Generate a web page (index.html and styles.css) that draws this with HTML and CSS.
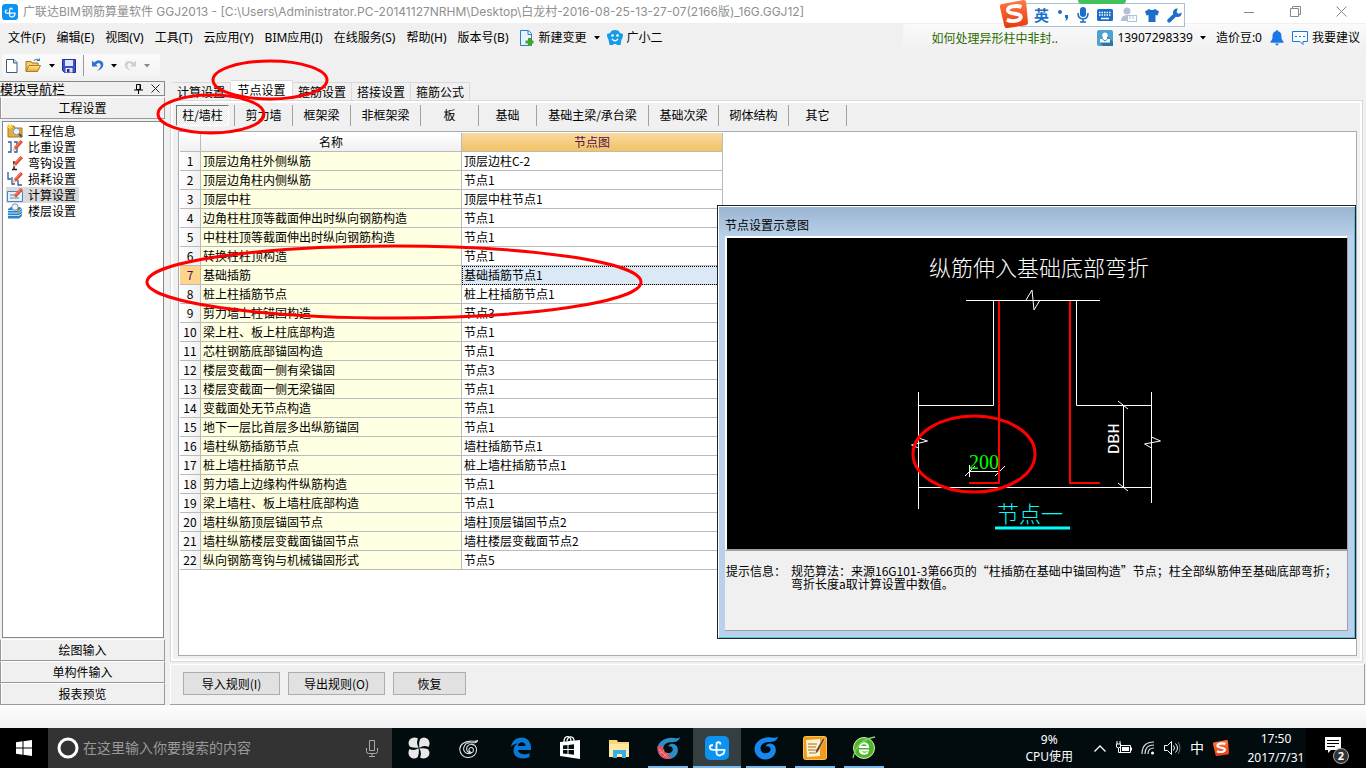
FILE: index.html
```html
<!DOCTYPE html>
<html lang="zh-CN">
<head>
<meta charset="utf-8">
<title>广联达BIM钢筋算量软件 GGJ2013</title>
<link rel="stylesheet" href="styles.css">
</head>
<body>
<svg class="defs" aria-hidden="true">
  <defs>
    <linearGradient id="gFolder" x2="0" y2="1"><stop stop-color="#ffe9a0"/><stop offset="1" stop-color="#e5a52c"/></linearGradient>
    <linearGradient id="gRed" x2="0" y2="1"><stop stop-color="#ff7a45"/><stop offset="1" stop-color="#e8380d"/></linearGradient>
    <symbol id="app" viewBox="0 0 24 24"><rect width="24" height="24" rx="5" fill="#0c93f2"/><g fill="none" stroke="#fff" stroke-width="1.800"><path d="M15.500 8.500c0-3-4-3-4 0v8c0 3 3 3.500 4.500 2.500"/><path d="M8 9c-4 0-4.500 4.800 0 4.800h11.500c0 3-1.500 5-4 5"/></g></symbol>
    <symbol id="pencil" viewBox="0 0 16 16"><path d="M7 9l6-7 2 1.500-6 7-2.500 1z" fill="#e2472f"/><path d="M7 8L13.500 1 16 3 9 10.500z" fill="#e2472f"/><path d="M7 8l2 2.500-3.500 1.500z" fill="#edc293"/><path d="M8.500 8L14 2.200" stroke="#ff9c85"/></symbol>
    <symbol id="caret" viewBox="0 0 6 4"><path d="M0 0h6L3 3.500z" fill="currentColor"/></symbol>
    <symbol id="swirl" viewBox="0 0 24 24"><path d="M23 2c-3 2-6 .5-9 .8C7 3 1 7 1.200 13 1.300 18 5.500 22.500 11 22.500c6 0 10.500-4 10.300-9.500-.2-3.500-2.500-6-5.500-6.300-4-.4-7 2.800-6.300 6.300.4 2.500 3 4 5 3.300-1.500-.7-2.600-2-2.200-3.800.5-2.200 3.600-2.800 4.800-.7 1.500 3-.8 6-4.600 6C8 18 5 14.500 6 10.500 7 6.500 11 4.500 15 4.800c4 .2 7 0 8-2.800z"/></symbol>
    <symbol id="gmark" viewBox="0 0 24 24"><path d="M24 .5c-3 2.500-6 .5-10 .8C6 1.800.5 7 .5 13c0 6 5 10.500 11 10.500S22 19 21.800 14c0-3.500-2-6-5-6.500-2.500-.3-4.500.8-5.300 2.800 3-.6 5.500 1 5 3.700-.4 2-2.500 3.300-5 3.300-3 0-5-2-5-4.800C6.500 8.500 10 6 14.500 6c5 0 8.500-1 9.500-5.500z"/></symbol>
    <symbol id="sogou" viewBox="0 0 26 26"><path d="M1 4L22 0q2 0 2.300 2L26 21q0 2-2 2.500L7 26q-2.500.5-3-2L0 7Q-.3 4.500 1 4z" fill="url(#gRed)"/><path d="M20 6.500C15 4.500 7 6 7.300 9.700c.5 4 12.700 2 12 6.300-.7 4-8.800 4.300-13 2.300" fill="none" stroke="#fff" stroke-width="3.500"/></symbol>
  </defs>
</svg>

<header class="titlebar">
  <svg class="i16"><use href="#app"/></svg>
  <h1>广联达BIM钢筋算量软件 GGJ2013 - [C:\Users\Administrator.PC-20141127NRHM\Desktop\白龙村-2016-08-25-13-27-07(2166版)_16G.GGJ12]</h1>
  <div class="winbtns">
    <button aria-label="最小化"><svg width="10" height="10"><path d="M0 5.500h10" stroke="#888"/></svg></button>
    <button aria-label="还原"><svg width="11" height="11"><path d="M.5 2.500h8v8h-8zM2.500 2.500v-2h8v8h-2" fill="none" stroke="#888"/></svg></button>
    <button aria-label="关闭"><svg width="11" height="11"><path d="M.5.5l10 10M10.500.5l-10 10" stroke="#888"/></svg></button>
  </div>
</header>

<div class="menubar">
  <nav class="menus">
    <button>文件(F)</button><button>编辑(E)</button><button>视图(V)</button><button>工具(T)</button><button>云应用(Y)</button><button>BIM应用(I)</button><button>在线服务(S)</button><button>帮助(H)</button><button>版本号(B)</button>
  </nav>
  <button class="tool"><svg class="i16" viewBox="0 0 16 16"><path d="M1.500.5h8l3 3v12h-11z" fill="#e8f4fd" stroke="#2a7fc4"/><path d="M9 .5v4h4" fill="none" stroke="#2a7fc4"/><path d="M9 8h3v2.500h2.500v3H12V16H9v-2.500H6.500v-3H9z" fill="#45a51c"/></svg>新建变更<svg class="caret wide"><use href="#caret"/></svg></button>
  <button class="tool"><svg class="i16" viewBox="0 0 16 16"><path d="M8 0c3 0 4 1 5 3l3 1c0 3-.5 4-1.500 5.500L13.500 15H10l-1-1H7l-1 1H2.500l-1-5.500C.5 8 0 7 0 4l3-1C4 1 5 0 8 0z" fill="#159be8"/><path d="M5 9q3 3.500 6 0" fill="none" stroke="#fff" stroke-width="1.300"/><circle cx="5.500" cy="5.500" r="1.300" fill="#fff"/><circle cx="10.500" cy="5.500" r="1.300" fill="#fff"/></svg>广小二</button>
  <div class="promo"><a href="#">如何处理异形柱中非封..</a></div>
  <div class="account">
    <button class="tool phone"><svg class="i16" viewBox="0 0 16 16"><rect width="16" height="16" rx="2" fill="#4aa3d4"/><path d="M9 5l7 7v4H6l-3-4z" fill="#2d769f"/><path d="M8 2.500a2.800 2.800 0 0 1 2 4.800L10.500 9H13v3.500H3V9h2.500L6 7.300a2.800 2.800 0 0 1 2-4.800z" fill="#fff"/><path d="M5.500 9l2.500 2 2.500-2" fill="none" stroke="#3a8ab8"/></svg>13907298339<svg class="caret wide"><use href="#caret"/></svg></button>
    <button>造价豆:0</button>
    <button aria-label="通知"><svg width="14" height="16" viewBox="0 0 14 16"><path d="M7 0c1 0 1 1 1 1.300 3 .7 3.500 3 3.500 5.700 0 2 .5 3 2 4.500v1.200H.5v-1.200C2 10 2.500 9 2.500 7c0-2.700.5-5 3.500-5.700C6 1 6 0 7 0zM5 13.500h4L7.500 15.500h-1z" fill="#1878e8"/></svg></button>
    <button class="tool"><svg class="i16" viewBox="0 0 16 16"><path d="M.5 1.500h15v10H11v3l-3-3H.5z" fill="#f7fbff" stroke="#1f74d8"/><path d="M3 6.500h10" stroke="#1f74d8" stroke-dasharray="2 2"/></svg>我要建议</button>
  </div>
</div>

<div class="toolrow"><div class="toolbar">
  <button aria-label="新建"><svg width="12" height="14" viewBox="0 0 12 14"><path d="M.5.500h7.500l3 3v10H.5z" fill="#fff" stroke="#3b5a80"/><path d="M7.500.5v3.500H11" fill="#cfe0f2" stroke="#3b5a80"/></svg></button>
  <button aria-label="打开"><svg width="17" height="15" viewBox="0 0 17 15"><path d="M1 13.500V3.500h5l1 1.500h6v3" fill="#f5cf68" stroke="#a87316"/><path d="M1 13.500L4 7.500h11.500l-3 6z" fill="url(#gFolder)" stroke="#b47b18"/><path d="M9 2.500q3-3 5.500 0v-2m0 2h-2.500" fill="none" stroke="#3b6ea8"/></svg></button>
  <button aria-label="打开列表"><svg class="caret"><use href="#caret"/></svg></button>
  <button class="save" aria-label="保存"><svg width="14" height="14"><path d="M.5.500h13v13h-11l-2-2z" fill="#3c4fd0" stroke="#26318f"/><path d="M3 1h8v6H3z" fill="#dfe8fb"/><path d="M3.500 9h7v4.500h-7z" fill="#e4e4ea"/><path d="M5 10h2.500v3.500H5z" fill="#26318f"/></svg></button>
  <span class="vsep"></span>
  <button aria-label="撤销"><svg width="13" height="13"><path d="M1 1.500v6h6L5 5.500q3-3 4.500 0Q10.500 8.500 6 12c6-2 7.500-6 5.500-9Q8-.5 3 3.500z" fill="#2f74d2"/></svg></button>
  <button aria-label="撤销列表"><svg class="caret"><use href="#caret"/></svg></button>
  <button aria-label="重做"><svg width="13" height="13"><path d="M12 1.500v6H6l2-2q-3-3-4.500 0Q2.500 8.500 7 12 1 10 .7 5.500 2-.5 10 3.500z" fill="#cfcfcf"/></svg></button>
  <button aria-label="重做列表" class="dim"><svg class="caret"><use href="#caret"/></svg></button>
</div></div>

<main class="work">
  <aside class="side">
    <div class="side-head"><span>模块导航栏</span>
      <button aria-label="固定"><svg width="9" height="10"><path d="M2.500.500h4v5h-4zM0 6h9M4.500 6v4M6 1v5" fill="none" stroke="#000"/></svg></button>
      <button aria-label="关闭导航栏"><svg width="9" height="9"><path d="M.5.5l8 8M8.500.5l-8 8" stroke="#222"/></svg></button></div>
    <button class="group">工程设置</button>
    <ul class="list">
      <li><button><svg class="i16" viewBox="0 0 16 16"><path d="M1 3h6l1 2h7v9H1z" fill="#e5ae3c" stroke="#ad791c"/><path d="M0 3h6M3 0v6M1 1l4 4M5 1L1 5" stroke="#ffe45b"/><circle cx="9.500" cy="8.500" r="3.300" fill="#e7f3fc" stroke="#7f93a6"/><path d="M12 11l3 3" stroke="#555" stroke-width="2"/></svg>工程信息</button></li>
      <li><button><svg class="i16" viewBox="0 0 16 16"><path d="M1 3h3v10H1M7 3h3v10H7" fill="none" stroke="#2e5c9c" stroke-width="1.300"/><use href="#pencil"/></svg>比重设置</button></li>
      <li><button><svg class="i16" viewBox="0 0 16 16"><path d="M7 6v9M5 14.500h5M6 8.500h4" stroke="#222" stroke-width="1.500"/><use href="#pencil"/></svg>弯钩设置</button></li>
      <li><button><svg class="i16" viewBox="0 0 16 16"><path d="M1 1v7h3M5 6v7h3M11 9v5h4" fill="none" stroke="#2e5c9c" stroke-width="1.300"/><use href="#pencil"/></svg>损耗设置</button></li>
      <li><button class="on"><svg class="i16" viewBox="0 0 16 16"><path d="M.5 4.500h15v10H.5z" fill="#e5f0fb" stroke="#4b86c3"/><path d="M3 8h5M3 11h9" stroke="#4b86c3"/><use href="#pencil"/></svg>计算设置</button></li>
      <li><button><svg class="i16" viewBox="0 0 16 16"><path d="M1 6l3-2h9l2 2v7l-3 2.500H1z" fill="#2c82c9"/><path d="M1 7.500h11l3-2M1 10h11l3-2M1 12.500h11l3-2" fill="none" stroke="#bfe1f8"/><circle cx="8" cy="4" r="3.200" fill="#eaf4fc" stroke="#8396a8"/><path d="M10 6.500l3 3" stroke="#c98a2b" stroke-width="1.500"/></svg>楼层设置</button></li>
    </ul>
    <button class="group">绘图输入</button>
    <button class="group">单构件输入</button>
    <button class="group">报表预览</button>
  </aside>

  <section class="content">
    <div class="tabs" role="tablist">
      <button role="tab">计算设置</button><button role="tab" aria-selected="true" class="on">节点设置</button><button role="tab">箍筋设置</button><button role="tab">搭接设置</button><button role="tab">箍筋公式</button>
    </div>
    <div class="pane">
      <div class="kinds">
        <button class="on">柱/墙柱</button><button>剪力墙</button><button>框架梁</button><button class="w70">非框架梁</button><button>板</button><button>基础</button><button class="w112">基础主梁/承台梁</button><button class="w70">基础次梁</button><button class="w70">砌体结构</button><button>其它</button>
      </div>
      <div class="sheet">
        <table>
          <colgroup><col class="c-no"><col class="c-name"><col class="c-node"></colgroup>
          <thead><tr><th></th><th>名称</th><th class="hot">节点图</th></tr></thead>
          <tbody>
            <tr><th>1</th><td>顶层边角柱外侧纵筋</td><td>顶层边柱C-2</td></tr>
            <tr><th>2</th><td>顶层边角柱内侧纵筋</td><td>节点1</td></tr>
            <tr><th>3</th><td>顶层中柱</td><td>顶层中柱节点1</td></tr>
            <tr><th>4</th><td>边角柱柱顶等截面伸出时纵向钢筋构造</td><td>节点1</td></tr>
            <tr><th>5</th><td>中柱柱顶等截面伸出时纵向钢筋构造</td><td>节点1</td></tr>
            <tr><th>6</th><td>转换柱柱顶构造</td><td>节点1</td></tr>
            <tr class="current"><th>7</th><td>基础插筋</td><td>基础插筋节点1</td></tr>
            <tr><th>8</th><td>桩上柱插筋节点</td><td>桩上柱插筋节点1</td></tr>
            <tr><th>9</th><td>剪力墙上柱锚固构造</td><td>节点3</td></tr>
            <tr><th>10</th><td>梁上柱、板上柱底部构造</td><td>节点1</td></tr>
            <tr><th>11</th><td>芯柱钢筋底部锚固构造</td><td>节点1</td></tr>
            <tr><th>12</th><td>楼层变截面一侧有梁锚固</td><td>节点3</td></tr>
            <tr><th>13</th><td>楼层变截面一侧无梁锚固</td><td>节点1</td></tr>
            <tr><th>14</th><td>变截面处无节点构造</td><td>节点1</td></tr>
            <tr><th>15</th><td>地下一层比首层多出纵筋锚固</td><td>节点1</td></tr>
            <tr><th>16</th><td>墙柱纵筋插筋节点</td><td>墙柱插筋节点1</td></tr>
            <tr><th>17</th><td>桩上墙柱插筋节点</td><td>桩上墙柱插筋节点1</td></tr>
            <tr><th>18</th><td>剪力墙上边缘构件纵筋构造</td><td>节点1</td></tr>
            <tr><th>19</th><td>梁上墙柱、板上墙柱底部构造</td><td>节点1</td></tr>
            <tr><th>20</th><td>墙柱纵筋顶层锚固节点</td><td>墙柱顶层锚固节点2</td></tr>
            <tr><th>21</th><td>墙柱纵筋楼层变截面锚固节点</td><td>墙柱楼层变截面节点2</td></tr>
            <tr><th>22</th><td>纵向钢筋弯钩与机械锚固形式</td><td>节点5</td></tr>
          </tbody>
        </table>
      </div>
    </div>
    <div class="actions"><button>导入规则(I)</button><button>导出规则(O)</button><button class="short">恢复</button></div>
  </section>
</main>

<div class="desk"></div>
<footer class="taskbar">
  <button class="start" aria-label="开始"><svg width="16" height="16"><path d="M0 2.200L6.500 1.300v6.200H0zM7.500 1.200L16 0v7.500H7.500zM0 8.500h6.500v6.200L0 13.800zM7.500 8.500H16V16l-8.500-1.200z" fill="#fff"/></svg></button>
  <label class="search"><svg width="22" height="22"><circle cx="11" cy="11" r="9" fill="none" stroke="#fff" stroke-width="3"/></svg><input type="text" placeholder="在这里输入你要搜索的内容"><svg width="12" height="17"><path d="M3.500.500h5v10h-5zM.5 8v3.500q0 2 2 2h7q2 0 2-2V8M6 13.500v3M3 16.500h6" fill="none" stroke="#aaa"/></svg></label>
  <div class="quick">
    <button aria-label="四叶"><svg width="22" height="22" viewBox="0 0 22 22"><g fill="#e8e8e8"><path id="leaf" d="M10 1.500Q5.500-1 2 2.200-1 6 2 9.800q4 1.700 8.700.7Q7.800 6 10 1.500z"/><use href="#leaf" transform="rotate(90 11 11)"/><use href="#leaf" transform="rotate(180 11 11)"/><use href="#leaf" transform="rotate(270 11 11)"/></g></svg></button>
    <button aria-label="旋涡"><svg width="20" height="20" viewBox="-1 -1 26 26" fill="none" stroke="#ddd" stroke-width="1.300"><use href="#swirl"/></svg></button>
  </div>
  <div class="apps">
    <button aria-label="Edge"><svg width="22" height="22" viewBox="0 0 22 22"><path d="M1 10C2 4 6 .5 11.500.5 17.500.5 21 5 21 11v2H8c.3 4 7 6 11.500 3v4C13 23 3.500 21.500 3.500 13.500 3.500 10 5.500 7.500 8 6.500 5 6.500 2.500 8 1 10zm7-1h7.500c0-5-7-5-7.500 0z" fill="#0a78d7"/></svg></button>
    <button aria-label="应用商店"><svg width="22" height="24" viewBox="0 0 22 24"><path d="M1 6l20-2v19L1 20z" fill="#fff"/><path d="M5 6c0-7 7-7 7-1M8 5c1-6 7-5 7 0" fill="none" stroke="#fff" stroke-width="1.300"/><path d="M4 9.500l4.500-.5v4H4zM9.500 8.900L15 8.300V13H9.500zM4 14h4.500v4L4 17.500zM9.500 14H15v4.700l-5.500-.6z" fill="#020b0d"/></svg></button>
    <button aria-label="文件资源管理器"><svg width="22" height="19"><path d="M1 1h8l1 2h11v15H1z" fill="#f8d775"/><path d="M1 5h20v13H1z" fill="#ffe9a2"/><path d="M5 19v-8h13v8h-4v-4H9v4z" fill="#35aee8"/></svg></button>
    <button class="run" aria-label="广联达工具"><svg width="23" height="24" viewBox="0 0 24 24" fill="#2c8dc4"><use href="#gmark"/><path d="M.5 10l6 .5q-.5 5 4 6.800l5 5.200q-8 3-13-3.500Q0 15 .5 10z" fill="#e64c5c"/><path d="M2 13l9 9M3 18l5-4M7 21l4-3" stroke="#ffd5d8" stroke-dasharray="1 1"/></svg></button>
    <button class="run on" aria-label="广联达BIM钢筋"><svg width="24" height="24"><use href="#app"/></svg></button>
    <button class="run" aria-label="广联达"><svg width="24" height="24" viewBox="0 0 24 24" fill="#1788ee"><use href="#gmark"/></svg></button>
    <button class="run" aria-label="记事"><svg width="24" height="24"><rect x=".5" y=".5" width="23" height="23" rx="2" fill="#f29a1a" stroke="#ffc04a"/><path d="M3 4l14-1v17L4 21z" fill="#fff4cf"/><path d="M5 8h9M5 11h8M5 14h9M6 17h7" stroke="#a76b2a"/><path d="M20 2l2 1-7 13-3 2 1-4z" fill="#7b3c18" stroke="#fff" stroke-width=".5"/></svg></button>
    <button class="run" aria-label="浏览器"><svg width="24" height="24"><circle cx="12" cy="12" r="10.500" fill="#4fb52a" stroke="#d4f2c0"/><path d="M17 14.500H8c.5 3.500 5 4 8 2M8 11h8c-.5-5-7.500-5-8 0z" fill="none" stroke="#fff" stroke-width="2"/><path d="M1 22C4 8 12 3 23 1" fill="none" stroke="#7fd65a" stroke-width="1.300"/></svg></button>
  </div>
  <div class="tray">
    <div class="cpu"><span>9%</span><span>CPU使用</span></div>
    <svg width="12" height="7"><path d="M.5 6.500L6 1l5.500 5.500" fill="none" stroke="#fff" stroke-width="1.300"/></svg>
    <svg width="17" height="14"><path d="M5.500 4.500h10v7h-10zM16.500 6.500v3M1 3h5M2 0v3M5 0v3M1.500 3v3q2 2 4 0V3M3.500 7v4.500H6" fill="none" stroke="#fff"/><path d="M7 6h7v4H7z" fill="#fff"/></svg>
    <svg width="14" height="14"><g fill="none" stroke="#ddd" stroke-width="1.200"><path d="M1 13Q1 1 13 1M4 13q0-9 9-9M7 13q0-6 6-6"/></g><circle cx="11.500" cy="12" r="1.500" fill="#fff"/></svg>
    <svg width="17" height="14"><path d="M.5 4.500h3l4-4v13l-4-4h-3zM9.500 4.500q2 2.500 0 5M11.500 2.500q4 4.500 0 9" fill="none" stroke="#fff"/><path d="M14 1q4 6 0 12" fill="none" stroke="#777"/></svg>
    <span class="ime">中</span>
    <svg width="16" height="16"><use href="#sogou"/></svg>
    <div class="clock"><span>17:50</span><span>2017/7/31</span></div>
    <button class="notes" aria-label="操作中心"><svg width="26" height="26"><path d="M2 2h16v13H8l-3 3v-3H2z" fill="#fff"/><path d="M4 5.500h12M4 8.500h12M4 11.500h8" stroke="#000"/></svg><span class="badge">2</span></button>
  </div>
</footer>

<div class="imebar">
  <span class="green"></span>
  <svg class="logo" viewBox="0 0 26 26"><use href="#sogou"/></svg>
  <b>英</b>
  <svg width="12" height="14"><circle cx="3" cy="4" r="2" fill="#1b6fc8"/><path d="M8 7h3v3q0 2-3 3 1-1 1-3H8z" fill="#1b6fc8"/></svg>
  <svg width="12" height="16"><rect x="3" width="6" height="10" rx="3" fill="#1b6fc8"/><path d="M1 6q0 6 5 6t5-6M6 12v3M3 15h6" fill="none" stroke="#1b6fc8" stroke-width="1.600"/></svg>
  <svg width="16" height="12"><rect width="16" height="12" rx="1.500" fill="#1b6fc8"/><path d="M2 3.500h12M2 6h12" stroke="#fff" stroke-width="1.500" stroke-dasharray="1.500 1"/><path d="M4 9.500h8" stroke="#fff" stroke-width="1.500"/></svg>
  <svg width="16" height="16"><circle cx="6" cy="4" r="3.500" fill="#b4bfd8"/><path d="M0 14q0-6 6-6t6 6z" fill="#b4bfd8"/><rect x="6.500" y="8.500" width="9" height="6" fill="#fff" stroke="#b4bfd8"/><path d="M9 9v3M12 9v3" stroke="#b4bfd8"/></svg>
  <svg width="14" height="13"><path d="M4 0q3 2 6 0l4 2.500-1.500 4L10.500 6v7h-7V6l-2 .5L0 2.500z" fill="#1b6fc8"/></svg>
  <svg width="15" height="15"><path d="M14.500 4.500L11.500 6 9.500 4l1.300-3.500C7.500 0 5 3 6.300 6L.5 11.500q-1 2 1 3 1 .5 2-.5L9 8.700c3.500 1 6-1.200 5.500-4.200z" fill="#1b6fc8"/></svg>
</div>

<section class="dialog" role="dialog" aria-labelledby="dlg">
  <h2 id="dlg">节点设置示意图</h2>
  <svg class="drawing" viewBox="727 238 620 311" role="img" aria-label="纵筋伸入基础底部弯折">
    <text x="929" y="276" class="cad white">纵筋伸入基础底部弯折</text>
    <g fill="none" stroke="#fff">
      <path d="M966 300.500h134M1026 300l6-10 2 20 6-10M993.500 301v104.500h-75M1076.500 301v104.500h75M918.500 392v117M918.500 438l9 3-16 4 7 3M1151.500 392v111M1151.500 437l9 4-16 3 7 4M919 487.500h233M1123.500 405v83M1118 401l10 8M1118 483l10 8M970 471.500h30M969.500 465v12M965 476l10-10M995 476l10-10"/>
    </g>
    <path d="M999 301v182h-30M1070 301v182h30" fill="none" stroke="#f00" stroke-width="2"/>
    <text x="969" y="469" class="num green">200</text>
    <text transform="translate(1119 454) rotate(-90)" class="mono white">DBH</text>
    <text x="997" y="522" class="cad cyan">节点一</text>
    <path d="M995 528h75" stroke="#0ff" stroke-width="3"/>
    <ellipse cx="974" cy="454" rx="61" ry="38" fill="none" stroke="#f00" stroke-width="3"/>
  </svg>
  <dl class="tips"><dt>提示信息：</dt><dd><div>规范算法：来源16G101-3第66页的“柱插筋在基础中锚固构造”节点；柱全部纵筋伸至基础底部弯折；</div><div>弯折长度a取计算设置中数值。</div></dd></dl>
</section>

<svg class="marks" viewBox="0 0 660 330" aria-hidden="true">
  <g fill="none" stroke="#f00" stroke-width="3"><ellipse cx="270" cy="80" rx="57" ry="19"/><ellipse cx="211" cy="114" rx="53" ry="19"/><ellipse cx="394" cy="282" rx="247" ry="36"/></g>
</svg>
</body>
</html>
```
FILE: styles.css
```css
* { box-sizing: border-box; }
body {
  margin: 0;
  min-height: 100vh;
  position: relative;
  display: flex;
  flex-direction: column;
  overflow-x: hidden;
  background: #f0f0f0;
  color: #000;
  font: 12px/16px "Noto Sans CJK SC", sans-serif;
}
button, input { font: inherit; color: inherit; }
button { display: inline-flex; align-items: center; justify-content: center; padding: 0; border: 0; background: none; white-space: nowrap; }
svg { flex: none; display: block; }
.defs { position: absolute; width: 0; height: 0; }
.i16 { width: 16px; height: 16px; }
.caret { width: 6px; height: 4px; }

/* title and menu */
.titlebar { display: flex; align-items: center; gap: 5px; height: 23px; padding-left: 2px; background: #fff; }
.titlebar h1 { flex: 1; margin: 0; font: 12px/20px Inter, "Noto Sans CJK SC", sans-serif; color: #8f8f8f; white-space: nowrap; }
.winbtns { display: flex; height: 20px; padding-right: 2px; }
.winbtns button { width: 46px; }

.menubar { display: flex; align-items: center; height: 29px; padding-left: 8px; font-family: "Noto Sans", "Noto Sans CJK SC", sans-serif; }
.menus { display: flex; gap: 11px; margin-right: 10px; }
.tool { gap: 4px; margin-right: 7px; }
.caret.wide { margin-left: 3px; }
.promo { display: flex; align-items: center; width: 188px; height: 28px; margin-left: auto; padding-left: 28px; border-radius: 4px; background: linear-gradient(#fafafa, #f0f0f0); font-family: "Noto Sans CJK SC", sans-serif; }
.promo a { color: #2b6a00; text-decoration: none; white-space: nowrap; }
.account { display: flex; align-items: center; gap: 8px; height: 28px; padding: 0 6px; background: linear-gradient(#fafafa, #f0f0f0); }
.account .tool { margin-right: 0; }
.account .phone { margin-right: 2px; }

.toolrow { height: 28px; padding: 2px; }
.toolbar { display: flex; align-items: center; gap: 7px; width: 158px; height: 23px; padding: 0 4px; border-radius: 3px; background: linear-gradient(#fbfbfb, #f3f3f3); }
.vsep { width: 1px; height: 21px; background: #999; }
.dim { color: #888; }

/* work area */
.work { flex: 1; display: flex; gap: 5px; padding-right: 1px; }
.side { display: flex; flex-direction: column; width: 165px; padding-top: 1px; }
.side-head { display: flex; align-items: center; gap: 8px; height: 15px; padding-right: 4px; border: 1px solid #888; border-left: 0; margin-bottom: 1px; }
.side-head span { flex: 1; font-size: 13px; line-height: 13px; }
.group { width: 100%; height: 22px; border: 1px solid #999; border-top-color: #fff; background: #f0f0f0; box-shadow: inset 1px 0 #fff; }
.list { flex: 1; margin: 2px 1px 1px 2px; padding: 1px 3px; list-style: none; border: 1px solid #828790; background: #fff; }
.list li { height: 16px; display: flex; }
.list button { gap: 5px; padding: 0 3px 0 1px; }
.list .on { background: #d9d9d9; }

.content { flex: 1; min-width: 0; display: flex; flex-direction: column; }
.tabs { display: flex; align-items: flex-end; height: 20px; padding-left: 2px; }
.tabs button { width: 59px; height: 18px; border: 1px solid #d9d9d9; border-left-width: 0; border-bottom: 0; }
.tabs .on { width: 62px; height: 20px; background: #fff; padding-bottom: 2px; }
.pane { flex: 1; display: flex; flex-direction: column; margin-right: 2px; padding: 3px 5px 5px; border: 1px solid #d9d9d9; box-shadow: inset 0 0 0 2px #fff; }
.kinds { display: flex; align-items: center; height: 22px; margin-bottom: 5px; }
.kinds button { width: 58px; height: 21px; border-right: 1px solid #a0a0a0; }
.kinds .w70 { width: 70px; }
.kinds .w112 { width: 112px; }
.kinds .on { width: 53px; margin-right: 5px; border: 1px solid #fff; border-top-color: #777; border-left-color: #777; background: repeating-conic-gradient(#fff 0 25%, #e8e8e8 0 50%) 0 0 / 2px 2px; }
.kinds .on + button { width: 59px; border-left: 1px solid #a0a0a0; }
.sheet { flex: 1; padding: 1px; margin-left: 2px; border: 1px solid #a9acb5; background: #fff; }

table { table-layout: fixed; width: 543px; border-spacing: 0; }
.c-no { width: 21px; }
.c-name, .c-node { width: 261px; }
th, td { height: 19px; padding: 0 2px; border: solid #bbb; border-width: 0 1px 1px 0; line-height: 16px; text-align: left; white-space: nowrap; }
th { padding: 0; font-weight: normal; text-align: center; background: linear-gradient(#fff, #f0f0f0); }
tbody th { background: linear-gradient(90deg, #fff, #f0f0f0); }
td:nth-child(2) { background: #ffffe1; }
th.hot { color: #501050; background: linear-gradient(#f9d99d, #f2c265); }
.current th { color: #501050; background: #ffd58c; }
.current td:last-child { background: #dbe9f7; outline: 1px dotted #000; outline-offset: -1px; }

.actions { display: flex; gap: 8px; margin-top: 2px; height: 41px; padding: 8px 13px; border: 1px solid #a0a0a0; border-width: 0 1px 1px 0; box-shadow: inset 1px 1px #fff; }
.actions button { width: 97px; height: 23px; border: 1px solid #adadad; background: #e1e1e1; }
.actions .short { width: 73px; }

/* desktop taskbar */
.desk { height: 23px; background: linear-gradient(#fdfdfd, #f1f1f1); }
.taskbar { display: flex; height: 40px; color: #fff; background: #020b0d; font-family: "Noto Sans", "Noto Sans CJK SC", sans-serif; }
.start { width: 48px; background: #000; }
.search { display: flex; align-items: center; gap: 4px; width: 344px; padding: 0 14px 0 9px; background: #333; }
.search input { flex: 1; min-width: 0; padding: 0; border: 0; outline: 0; background: none; font-size: 14px; }
.search input::placeholder { color: #999; }
.quick { display: flex; width: 105px; padding-left: 2px; }
.quick button { width: 49px; }
.apps { display: flex; gap: 1px; }
.apps button { width: 48px; height: 40px; }
.apps .run { background: linear-gradient(#76b9ed, #76b9ed) center bottom / 40px 2px no-repeat; }
.apps .run.on { background-color: #343f42; background-size: 48px 2px; }
.tray { display: flex; align-items: center; gap: 9px; margin-left: auto; }
.cpu, .clock { display: flex; flex-direction: column; text-align: center; }
.cpu { margin-right: 12px; }
.cpu span { line-height: 17px; }
.clock { width: 60px; margin-left: 8px; }
.clock span { line-height: 19px; }
.ime { font-size: 14px; }
.notes { position: relative; width: 60px; height: 40px; margin-left: -9px; background: #000; }
.badge { position: absolute; right: 17px; bottom: 4px; width: 16px; height: 16px; border: 1px solid #aaa; border-radius: 50%; background: #333; font-weight: bold; font-size: 11px; line-height: 14px; text-align: center; }

/* floating windows */
.imebar { position: absolute; left: 1020px; top: 3px; display: flex; align-items: center; gap: 8px; height: 24px; width: 165px; padding-left: 13px; border: 1px solid #a9bfd8; background: #fff; color: #1b6fc8; }
.imebar b { font-size: 15px; line-height: 20px; }
.imebar .logo { position: absolute; left: -21px; top: -4px; width: 28px; height: 28px; }
.imebar .green { position: absolute; left: 57px; top: -4px; width: 48px; height: 4px; border-radius: 0 0 6px 6px; background: #42c25a; }

.dialog { position: absolute; left: 717px; top: 205px; width: 639px; padding: 0 7px 7px; border: 1px solid #222; background: linear-gradient(#99b4d1, #b9d1ea 31px); box-shadow: inset 1px 1px #fff, inset -1px -1px #4ec5e8; }
.dialog h2 { margin: 0; padding: 11px 0 3px; font: 12px/16px "Noto Sans CJK SC", sans-serif; }
.drawing { width: 100%; height: auto; border: 2px solid #fff; border-width: 2px 1px 2px 2px; border-right-color: #a0a0a0; border-bottom-color: #a0a0a0; background: #000; }
.cad { font: 300 22px "Noto Sans CJK SC", sans-serif; }
.num { font: 20px "Liberation Serif", serif; }
.mono { font: 17px "Liberation Mono", monospace; }
.white { fill: #fff; }
.num.green { fill: #0f0; }
.cyan { fill: #0ff; }
.tips { display: flex; height: 80px; margin: 0; padding: 13px 1px 0; background: #f0f0f0; border: solid #a0a0a0; border-width: 0 1px 1px 0; line-height: 13px; }
.tips dt { width: 65px; }
.tips dd { margin: 0; white-space: nowrap; }
.marks { position: absolute; left: 0; top: 0; width: 660px; height: 330px; pointer-events: none; }
```
